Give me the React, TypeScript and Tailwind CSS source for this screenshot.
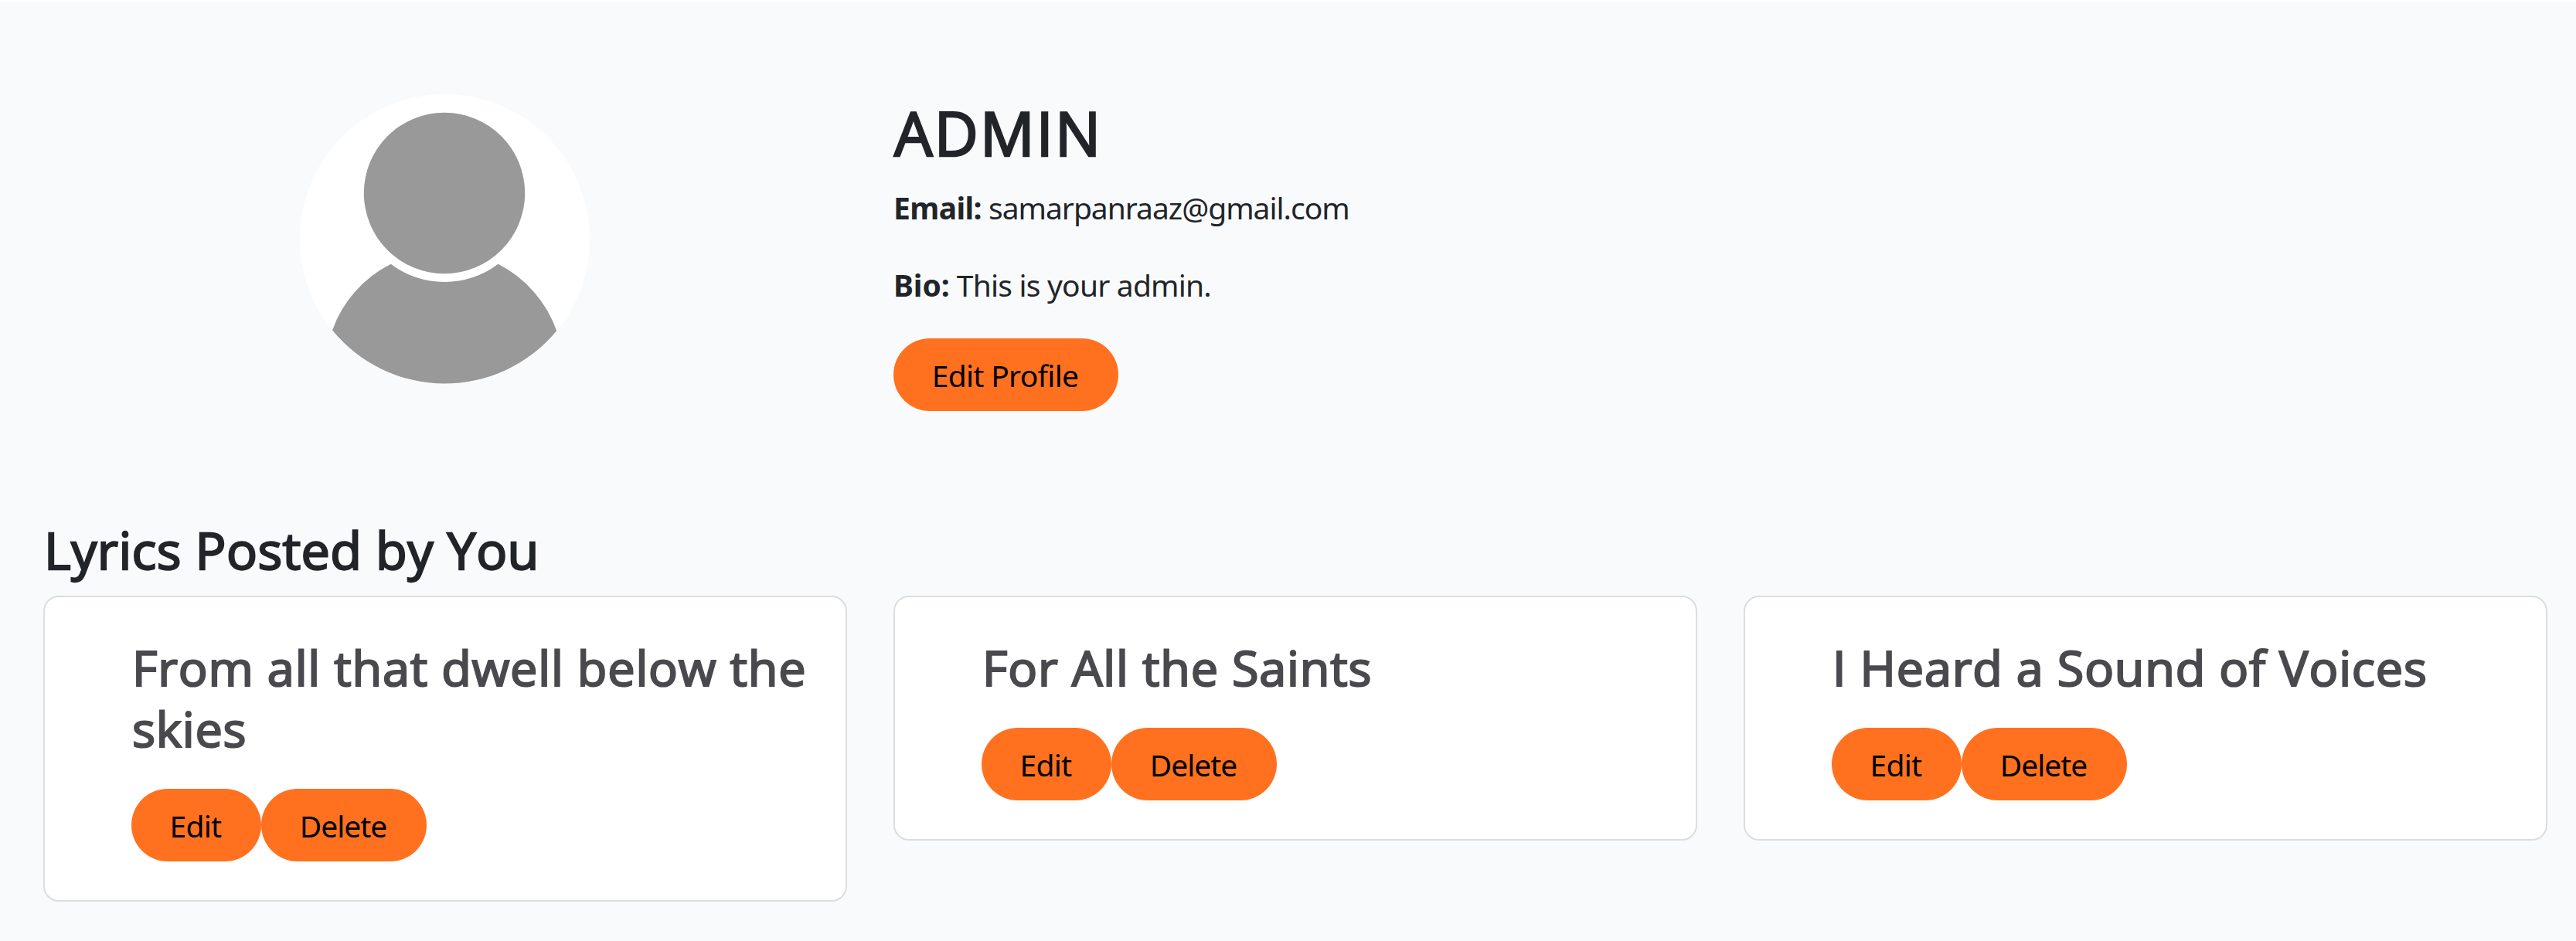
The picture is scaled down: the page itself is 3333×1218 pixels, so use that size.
type Lyric = { title: string };

const lyrics: Lyric[] = [
  { title: "From all that dwell below the skies" },
  { title: "For All the Saints" },
  { title: "I Heard a Sound of Voices" },
];

function Avatar() {
  return (
    <svg viewBox="0 0 375 375" className="size-[375px] rounded-full bg-white" role="img" aria-label="Profile">
      <circle cx="187" cy="128" r="104.2" fill="#999" />
      <path
        fill="#999"
        d="M117.7 219.8A115 115 0 0 0 256.5 219.8A154 154 0 0 1 332.2 306.2A187.5 187.5 0 0 1 42 305.4A154 154 0 0 1 117.7 219.8Z"
      />
    </svg>
  );
}

function PillButton({ label, className }: { label: string; className: string }) {
  return (
    <button
      className={`h-[94px] rounded-full bg-[#ff711f] pt-[2px] pr-[2px] text-center text-[39px] leading-[60px] whitespace-nowrap text-black ${className}`}
    >
      {label}
    </button>
  );
}

function LyricCard({ title }: Lyric) {
  return (
    <article className="rounded-[20px] border-2 border-[#dcdddd] bg-white pt-[51px] pr-[38px] pb-[50px] pl-[112px]">
      <h3 className="mb-[39px] pl-px font-['Open_Sans',sans-serif] text-[63px] leading-[79px] font-normal tracking-[0.8px] text-[#4a494e] [-webkit-text-stroke:2.2px_currentColor]">
        {title}
      </h3>
      <div className="flex">
        <PillButton label="Edit" className="w-[168px] tracking-[-0.7px]" />
        <PillButton label="Delete" className="w-[214px] tracking-[-1px]" />
      </div>
    </article>
  );
}

export default function App() {
  return (
    <main className="min-h-[1218px] border-t-2 border-white bg-[#f9fafc] pr-[37px] pl-[56px] font-['Noto_Sans',sans-serif] text-[#212529]">
      <section className="grid h-[667px] grid-cols-3 gap-x-[60px] pt-[120px]">
        <div className="flex items-start justify-center pr-[2px]">
          <Avatar />
        </div>
        <div className="col-span-2 pt-[2px]">
          <h1 className="mb-[19px] pl-px font-['Open_Sans',sans-serif] text-[78.5px] leading-[96px] font-normal tracking-[2.2px] [-webkit-text-stroke:2.6px_currentColor]">
            ADMIN
          </h1>
          <p className="mb-[40px] text-[39px] leading-[60px] tracking-[-1.02px]">
            <strong className="font-bold tracking-[-0.6px]">Email:</strong> samarpanraaz@gmail.com
          </p>
          <p className="mb-[39px] text-[39px] leading-[60px] tracking-[-0.8px]">
            <strong className="font-bold tracking-[-0.1px]">Bio:</strong> This is your admin.
          </p>
          <PillButton label="Edit Profile" className="w-[291px] tracking-[-0.7px]" />
        </div>
      </section>

      <section>
        <h2 className="mb-[18px] pl-px font-['Open_Sans',sans-serif] text-[66.5px] leading-[84px] font-normal tracking-[0.4px] [-webkit-text-stroke:2.3px_currentColor]">
          Lyrics Posted by You
        </h2>
        <div className="grid grid-cols-3 items-start gap-x-[60px]">
          {lyrics.map((lyric) => (
            <LyricCard key={lyric.title} title={lyric.title} />
          ))}
        </div>
      </section>
    </main>
  );
}
